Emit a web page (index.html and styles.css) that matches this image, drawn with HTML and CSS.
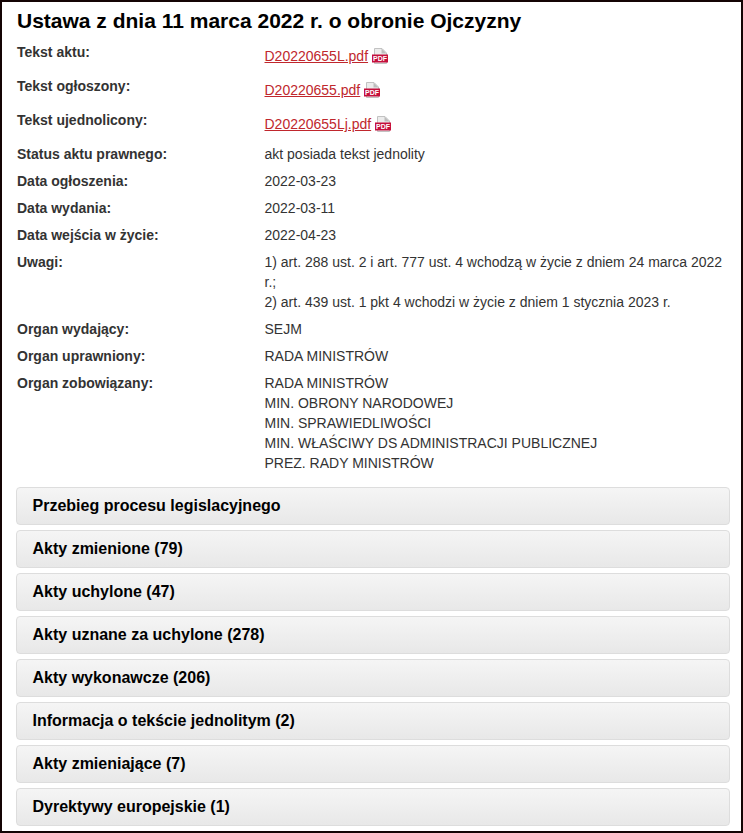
FILE: index.html
```html
<!DOCTYPE html>
<html lang="pl">
<head>
    <meta charset="utf-8">
    <title>Ustawa z dnia 11 marca 2022 r. o obronie Ojczyzny</title>
    <link rel="stylesheet" href="styles.css">
</head>
<body>
    <div class="page">
        <h1>Ustawa z dnia 11 marca 2022 r. o obronie Ojczyzny</h1>

        <div class="row row-file">
            <div class="label">Tekst aktu:</div>
            <div class="value">
                <a href="#">D20220655L.pdf</a>
                <svg class="pdf" viewBox="0 0 16 16">
                    <path d="M2.5 .5H10L14.5 5V15.5H2.5Z" fill="#ececec" stroke="#c2c2c2"/>
                    <path d="M9.5 .5V5.5H14.5Z" fill="#bdbdbd"/>
                    <rect x="0" y="6.5" width="16" height="8" fill="#c40f3c"/>
                    <text x="8" y="13.3" class="pdf-label" text-anchor="middle" textLength="14" lengthAdjust="spacingAndGlyphs">PDF</text>
                </svg>
            </div>
        </div>
        <div class="row row-file">
            <div class="label">Tekst ogłoszony:</div>
            <div class="value">
                <a href="#">D20220655.pdf</a>
                <svg class="pdf" viewBox="0 0 16 16">
                    <path d="M2.5 .5H10L14.5 5V15.5H2.5Z" fill="#ececec" stroke="#c2c2c2"/>
                    <path d="M9.5 .5V5.5H14.5Z" fill="#bdbdbd"/>
                    <rect x="0" y="6.5" width="16" height="8" fill="#c40f3c"/>
                    <text x="8" y="13.3" class="pdf-label" text-anchor="middle" textLength="14" lengthAdjust="spacingAndGlyphs">PDF</text>
                </svg>
            </div>
        </div>
        <div class="row row-file">
            <div class="label">Tekst ujednolicony:</div>
            <div class="value">
                <a href="#">D20220655Lj.pdf</a>
                <svg class="pdf" viewBox="0 0 16 16">
                    <path d="M2.5 .5H10L14.5 5V15.5H2.5Z" fill="#ececec" stroke="#c2c2c2"/>
                    <path d="M9.5 .5V5.5H14.5Z" fill="#bdbdbd"/>
                    <rect x="0" y="6.5" width="16" height="8" fill="#c40f3c"/>
                    <text x="8" y="13.3" class="pdf-label" text-anchor="middle" textLength="14" lengthAdjust="spacingAndGlyphs">PDF</text>
                </svg>
            </div>
        </div>

        <div class="row">
            <div class="label">Status aktu prawnego:</div>
            <div class="value">akt posiada tekst jednolity</div>
        </div>
        <div class="row">
            <div class="label">Data ogłoszenia:</div>
            <div class="value">2022-03-23</div>
        </div>
        <div class="row">
            <div class="label">Data wydania:</div>
            <div class="value">2022-03-11</div>
        </div>
        <div class="row">
            <div class="label">Data wejścia w życie:</div>
            <div class="value">2022-04-23</div>
        </div>
        <div class="row">
            <div class="label">Uwagi:</div>
            <div class="value">1) art. 288 ust. 2 i art. 777 ust. 4 wchodzą w życie z dniem 24 marca 2022 r.;<br>2) art. 439 ust. 1 pkt 4 wchodzi w życie z dniem 1 stycznia 2023 r.</div>
        </div>
        <div class="row">
            <div class="label">Organ wydający:</div>
            <div class="value">SEJM</div>
        </div>
        <div class="row">
            <div class="label">Organ uprawniony:</div>
            <div class="value">RADA MINISTRÓW</div>
        </div>
        <div class="row">
            <div class="label">Organ zobowiązany:</div>
            <div class="value">RADA MINISTRÓW<br>MIN. OBRONY NARODOWEJ<br>MIN. SPRAWIEDLIWOŚCI<br>MIN. WŁAŚCIWY DS ADMINISTRACJI PUBLICZNEJ<br>PREZ. RADY MINISTRÓW</div>
        </div>

        <div class="sections">
            <div class="section">Przebieg procesu legislacyjnego</div>
            <div class="section">Akty zmienione (79)</div>
            <div class="section">Akty uchylone (47)</div>
            <div class="section">Akty uznane za uchylone (278)</div>
            <div class="section">Akty wykonawcze (206)</div>
            <div class="section">Informacja o tekście jednolitym (2)</div>
            <div class="section">Akty zmieniające (7)</div>
            <div class="section">Dyrektywy europejskie (1)</div>
        </div>
    </div>
</body>
</html>
```

FILE: styles.css
```css
html, body {
    margin: 0;
    padding: 0;
    background-color: #fff;
}
.page {
    box-sizing: border-box;
    height: 833px;
    overflow: hidden;
    padding: 7px 11px 0 14px;
    border: 2px solid #140404;
    font-family: "Liberation Sans", Arial, sans-serif;
    font-size: 14px;
    line-height: 20px;
    color: #333;
}
h1 {
    margin: 0 0 9px 1px;
    font-size: 21px;
    line-height: 24px;
    font-weight: bold;
    color: #000;
}
.row {
    display: flex;
    padding-bottom: 7px;
}
.row-file {
    height: 34px;
    box-sizing: border-box;
    padding-bottom: 0;
}
.label {
    flex: 0 0 248.5px;
    padding-left: 1px;
    box-sizing: border-box;
    font-weight: bold;
}
.value {
    flex: 1;
}
.row-file .value {
    display: flex;
    align-items: center;
    height: 20px;
    margin-top: 4px;
}
a {
    color: #c0272d;
    text-decoration: underline;
}
.pdf {
    width: 16px;
    height: 16px;
    margin-left: 4px;
}
.pdf-label {
    font-family: "Liberation Sans", Arial, sans-serif;
    font-size: 7.5px;
    font-weight: bold;
    fill: #fff;
}
.sections {
    display: flex;
    flex-direction: column;
    gap: 5px;
    margin-top: 7px;
}
.section {
    box-sizing: border-box;
    height: 38px;
    padding: 0 15.5px;
    border: 1px solid #ddd;
    border-radius: 4px;
    background: linear-gradient(#f5f5f5, #e8e8e8);
    font-size: 16px;
    line-height: 35px;
    font-weight: bold;
    color: #000;
}
```
